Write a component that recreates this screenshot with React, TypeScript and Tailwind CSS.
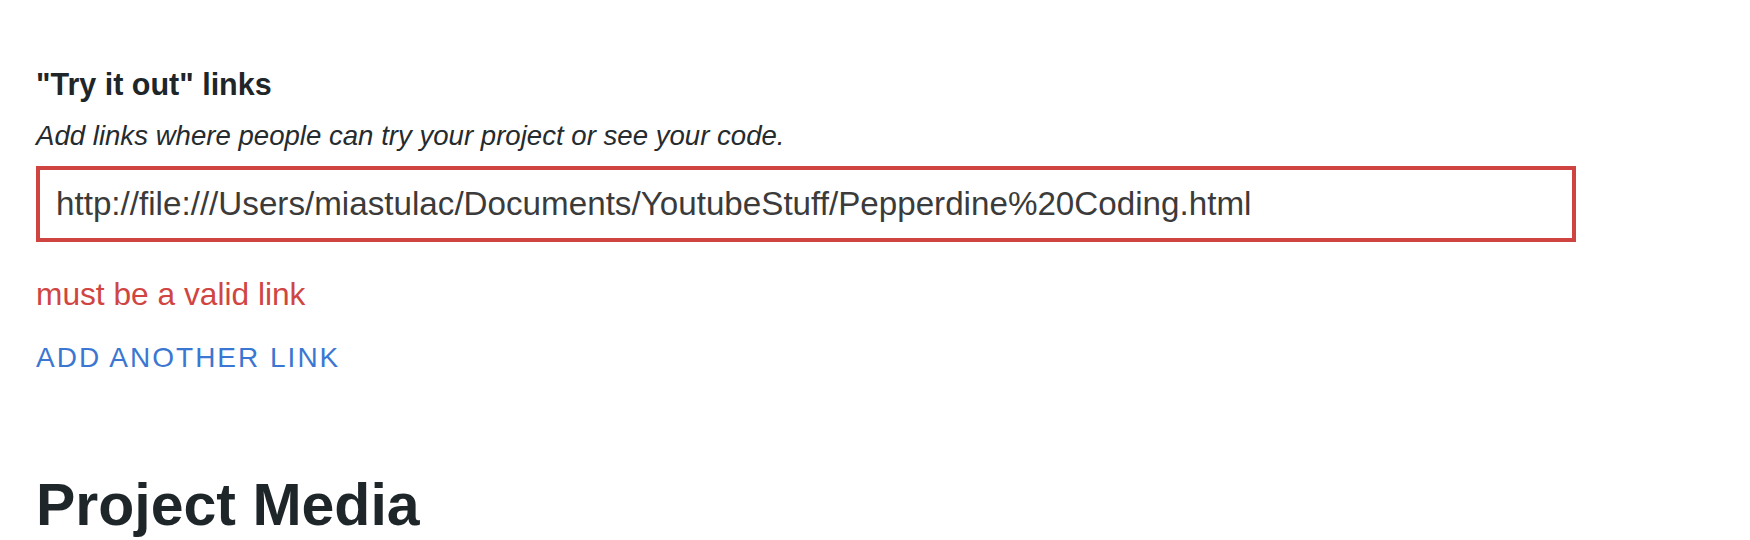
/**
 * "Try it out" links form section with a validation error
 */
import { useState } from 'react';

const sans = "font-['Liberation_Sans','Helvetica',Arial,sans-serif]";

export default function App() {
  const [link, setLink] = useState(
    'http://file:///Users/miastulac/Documents/YoutubeStuff/Pepperdine%20Coding.html'
  );

  return (
    <div className={`min-h-[540px] w-[1750px] bg-white pl-[36px] pt-[66px] ${sans}`}>
      {/* Links field */}
      <div className="w-[1540px]">
        <h3 className="text-[30.5px] leading-[36px] font-bold text-[#1e2629]">"Try it out" links</h3>
        <p className="mt-[18px] text-[27.6px] leading-[32px] italic text-[#252b2e]">
          Add links where people can try your project or see your code.
        </p>
        <input
          type="text"
          value={link}
          onChange={(e) => setLink(e.target.value)}
          className="mt-[14px] block h-[76px] w-full border-4 border-[#cf4441] bg-white px-[16px] text-[33.2px] text-[#3b3b3b] outline-none"
        />
        <p className="mt-[34px] text-[31.7px] leading-[36px] text-[#d04542]">must be a valid link</p>
        <button className="mt-[30px] block text-[28px] leading-[32px] tracking-[2px] text-[#3b77d2]">
          ADD ANOTHER LINK
        </button>
      </div>

      {/* Next section */}
      <h2 className="mt-[99px] text-[59px] leading-[64px] font-bold text-[#1e2629]">Project Media</h2>
    </div>
  );
}
